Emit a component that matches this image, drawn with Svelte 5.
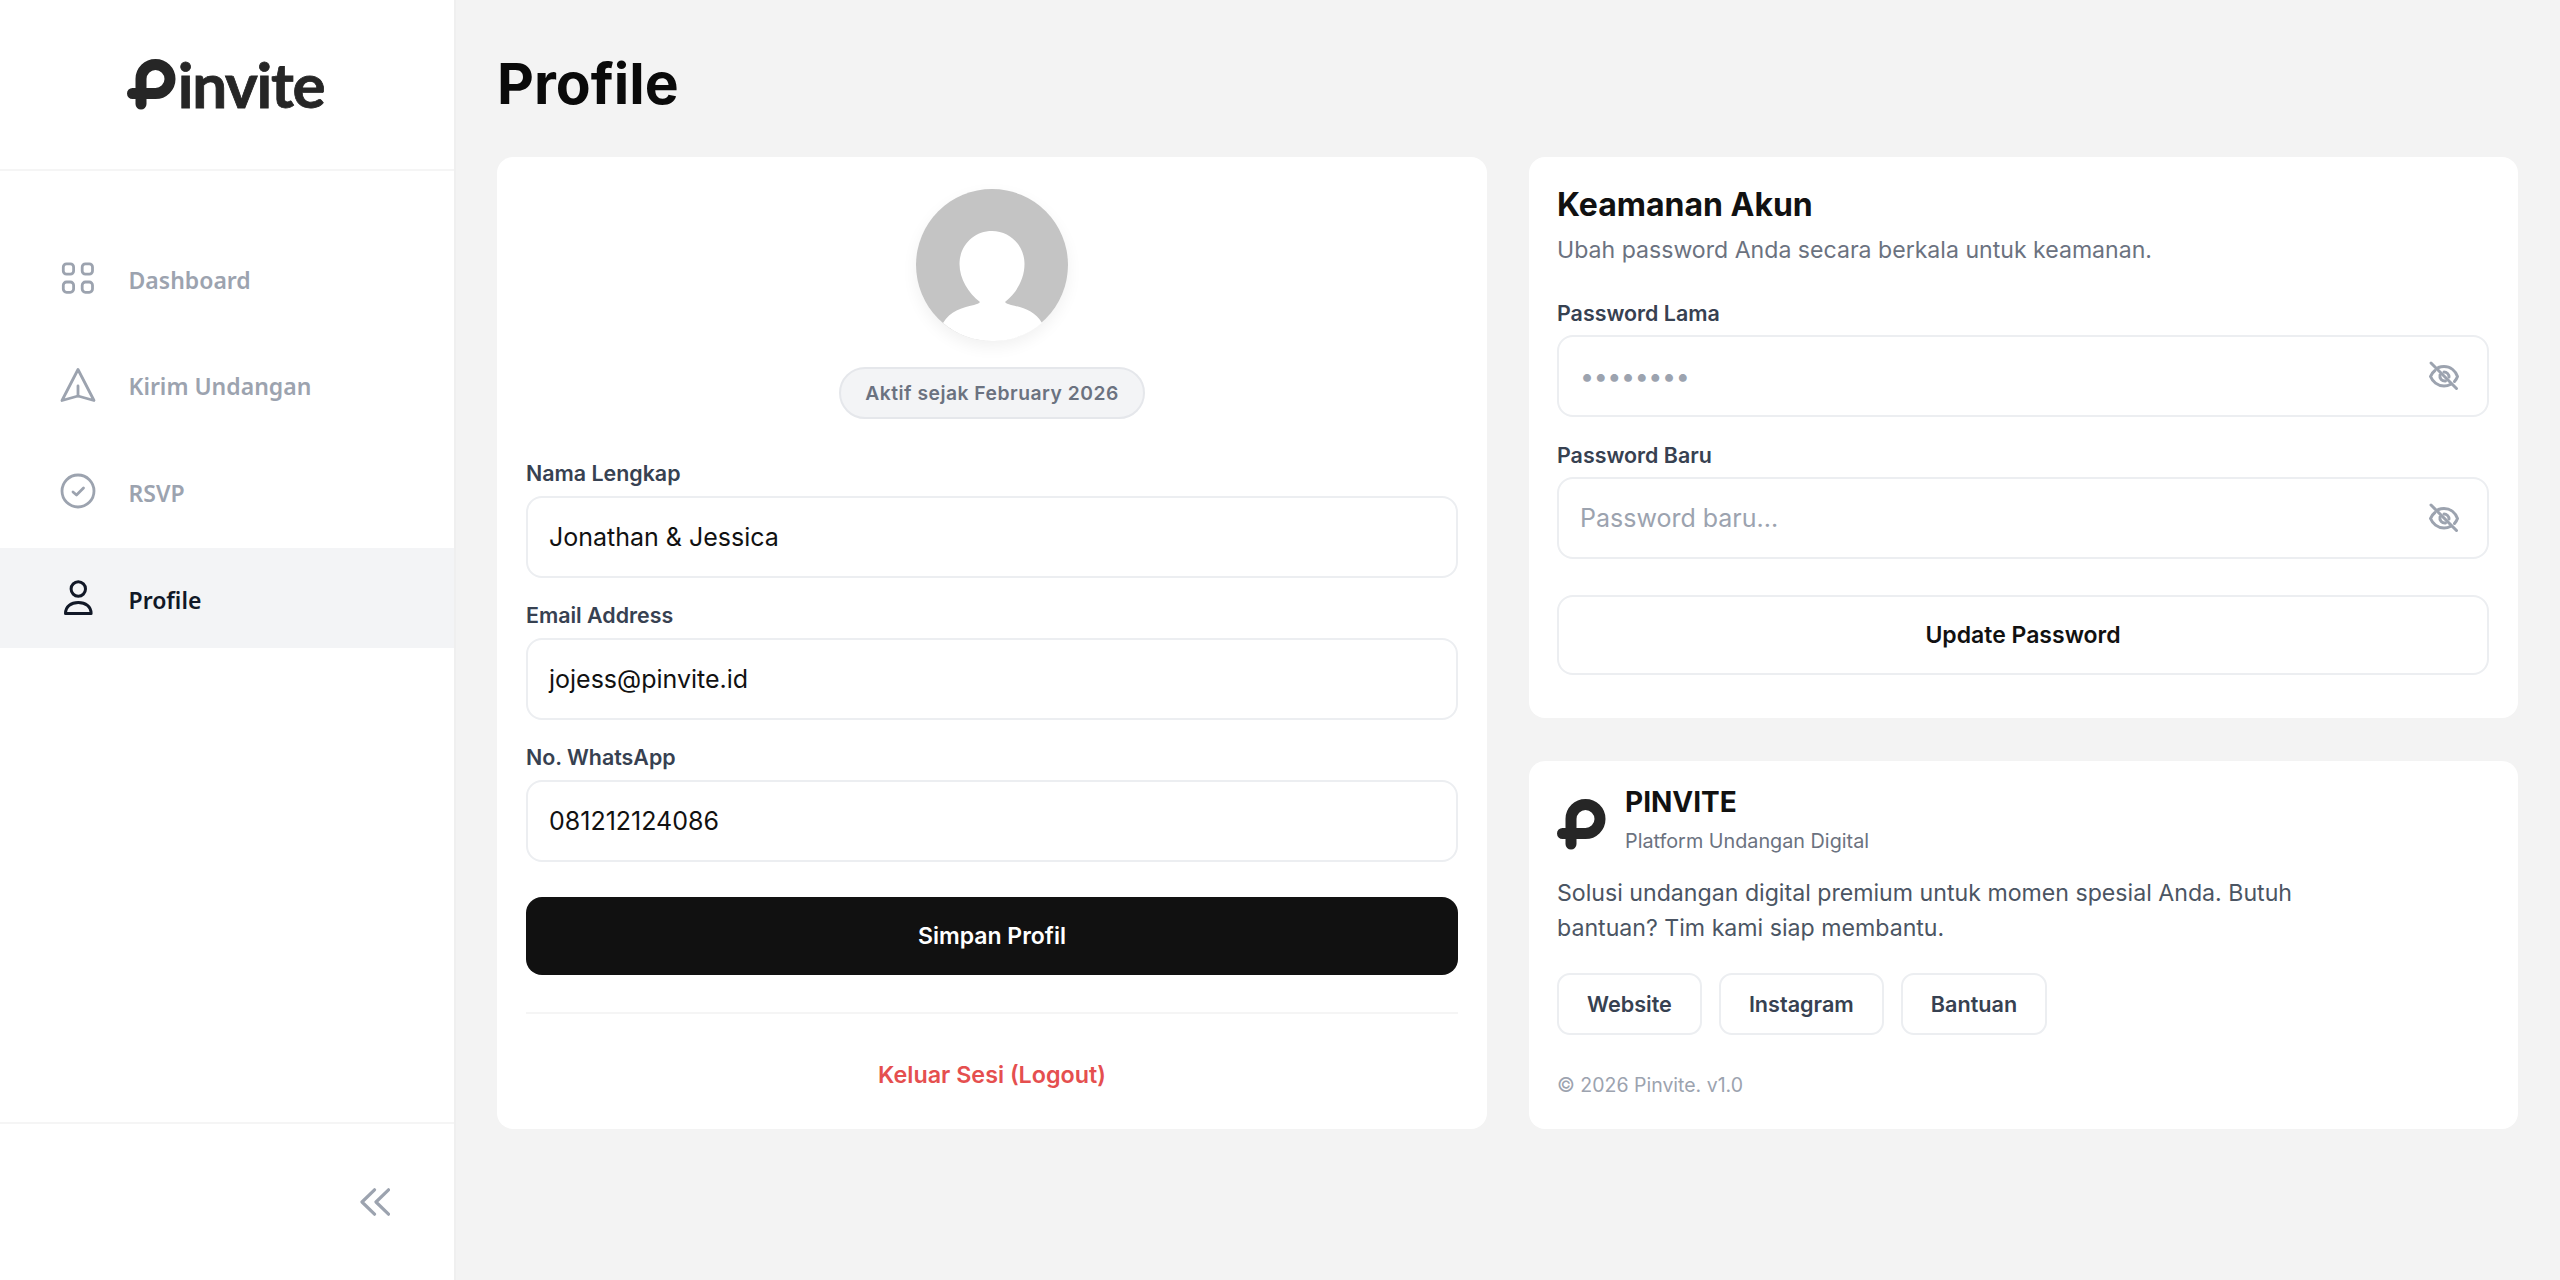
<script>
  const nav = [
    { label: 'Dashboard', icon: 'grid' },
    { label: 'Kirim Undangan', icon: 'send' },
    { label: 'RSVP', icon: 'check' },
    { label: 'Profile', icon: 'user', active: true }
  ];
  const fields = [
    { label: 'Nama Lengkap', value: 'Jonathan & Jessica' },
    { label: 'Email Address', value: 'jojess@pinvite.id' },
    { label: 'No. WhatsApp', value: '081212124086' }
  ];
  const links = ['Website', 'Instagram', 'Bantuan'];
</script>

{#snippet mark()}
  <svg class="mark" width="50" height="51" viewBox="0 0 50 51" fill="none" stroke="#262626" stroke-width="11" stroke-linecap="round">
    <path d="M14 45V20a14.500 14.500 0 1 1 14.500 14.500H5.500" />
  </svg>
{/snippet}

{#snippet eye()}
  <svg class="eye" width="32" height="32" viewBox="0 0 32 32" fill="none" stroke="#9ca3af" stroke-width="3" stroke-linecap="round" stroke-linejoin="round">
    <path d="M7 10.500C4.500 12.500 3 15 2.500 16.500 4.500 21.500 9.500 26 16 26c2.500 0 4.800-.7 6.800-1.800" />
    <path d="M10.500 7.500C12.200 6.800 14 6.500 16 6.500c6.500 0 11.500 4.500 13.500 10-.6 1.800-1.700 3.500-3 5" />
    <path d="M16 12a5 5 0 0 1 5 5" />
    <path d="M12 15a5 5 0 0 0 5.500 6" />
    <path d="M3 3l25.500 25.500" />
  </svg>
{/snippet}

<div class="shell">
  <aside class="sidebar">
    <div class="brand">
      {@render mark()}
      <span class="wordmark">invite</span>
    </div>
    <nav class="nav">
      {#each nav as item}
        <div class="item" class:active={item.active}>
          <svg width="38" height="38" viewBox="0 0 38 38" fill="none" stroke="currentColor" stroke-width="2.800" stroke-linecap="round" stroke-linejoin="round">
            {#if item.icon === 'grid'}
              <rect x="4.300" y="4.800" width="10.300" height="10.300" rx="3.200" />
              <rect x="23.200" y="4.800" width="10.300" height="10.300" rx="3.200" />
              <rect x="4.300" y="23" width="10.300" height="10.300" rx="3.200" />
              <rect x="23.200" y="23" width="10.300" height="10.300" rx="3.200" />
            {:else if item.icon === 'send'}
              <path d="M19 3.500 35 34.500 19 30 3 34.500Z" />
              <path d="M19 20v10" />
            {:else if item.icon === 'check'}
              <circle cx="19" cy="19" r="16" />
              <path d="M14 20l3.500 3 7-7" />
            {:else}
              <circle cx="19.300" cy="10" r="7.200" stroke-width="3" />
              <path d="M6.500 34.500c0-7 5.500-11 12.800-11s12.800 4 12.800 11Z" stroke-width="3" />
            {/if}
          </svg>
          <span>{item.label}</span>
        </div>
      {/each}
    </nav>
    <div class="collapse">
      <svg width="30" height="28" viewBox="0 0 30 28" fill="none" stroke="#9ca3af" stroke-width="3.200" stroke-linecap="round" stroke-linejoin="round">
        <path d="M14.500 1.800 2 14l12.500 12.200" />
        <path d="M28.500 1.800 16 14l12.500 12.200" />
      </svg>
    </div>
  </aside>

  <main class="main">
    <h1>Profile</h1>
    <div class="columns">
      <section class="card profile">
        <div class="avatar">
          <svg width="152" height="152" viewBox="0 0 152 152">
            <circle cx="76" cy="76" r="76" fill="#c4c4c4" />
            <path fill="#ffffff" d="M76 42c18 0 32.500 14.500 32.500 33 0 15-8 29-19.500 38 1 1.500 3 2 6 3 12 2.500 24 6 31 18A76 76 0 0 1 76 152a76 76 0 0 1-49-18c7-12 19-15.500 31-18 3-1 5-1.500 6-3-11.500-9-20.500-23-20.500-38 0-18.500 14.500-33 32.500-33Z" />
          </svg>
        </div>
        <div class="badge">Aktif sejak February 2026</div>
        <div class="fields">
          {#each fields as f}
            <div class="field">
              <div class="label">{f.label}</div>
              <div class="input">{f.value}</div>
            </div>
          {/each}
        </div>
        <button class="primary">Simpan Profil</button>
        <div class="divider"></div>
        <div class="logout">Keluar Sesi (Logout)</div>
      </section>

      <div class="right">
        <section class="card security">
          <h2>Keamanan Akun</h2>
          <p class="sub">Ubah password Anda secara berkala untuk keamanan.</p>
          <div class="field first">
            <div class="label">Password Lama</div>
            <div class="input pass"><span class="dots">••••••••</span>{@render eye()}</div>
          </div>
          <div class="field">
            <div class="label">Password Baru</div>
            <div class="input pass"><span class="placeholder">Password baru...</span>{@render eye()}</div>
          </div>
          <button class="outline">Update Password</button>
        </section>

        <section class="card about">
          <div class="about-head">
            {@render mark()}
            <div>
              <div class="about-title">PINVITE</div>
              <div class="about-sub">Platform Undangan Digital</div>
            </div>
          </div>
          <p class="about-text">Solusi undangan digital premium untuk momen spesial Anda. Butuh bantuan? Tim kami siap membantu.</p>
          <div class="links">
            {#each links as l}
              <div class="link">{l}</div>
            {/each}
          </div>
          <div class="copy">© 2026 Pinvite. v1.0</div>
        </section>
      </div>
    </div>
  </main>
</div>

<style>
  :global(body) {
    margin: 0;
    background: #f3f3f3;
  }
  .shell {
    display: flex;
    width: 2560px;
    height: 1280px;
    font-family: Inter, sans-serif;
    color: #111111;
    background: #f3f3f3;
    overflow: hidden;
  }
  .sidebar {
    width: 456px;
    box-sizing: border-box;
    flex: none;
    background: #ffffff;
    border-right: 2px solid #efefef;
    display: flex;
    flex-direction: column;
  }
  .brand {
    height: 171px;
    flex: none;
    box-sizing: border-box;
    border-bottom: 2px solid #f5f5f5;
    display: flex;
    align-items: flex-start;
    justify-content: center;
    padding-top: 59px;
    padding-right: 3px;
  }
  .wordmark {
    font-family: Lato, sans-serif;
    font-weight: 700;
    font-size: 62px;
    line-height: 50px;
    letter-spacing: -1.300px;
    color: #262626;
    margin-left: 1px;
    -webkit-text-stroke: 0.8px #262626;
  }
  .nav {
    flex: 1;
    padding-top: 57px;
    display: flex;
    flex-direction: column;
    gap: 6.700px;
  }
  .item {
    height: 100px;
    display: flex;
    align-items: center;
    gap: 31.500px;
    padding-left: 59px;
    color: #9ca3af;
    font-family: "Noto Sans", sans-serif;
    font-weight: 600;
    font-size: 23px;
  }
  .item span {
    padding-top: 3px;
  }
  .item.active {
    background: #f3f4f6;
    color: #111827;
  }
  .collapse {
    height: 158px;
    flex: none;
    box-sizing: border-box;
    border-top: 2px solid #f5f5f5;
    display: flex;
    align-items: center;
    justify-content: flex-end;
    padding-right: 64px;
  }
  .main {
    flex: 1;
    min-width: 0;
    padding: 0 41px 0 41px;
  }
  h1 {
    margin: 0;
    height: 157px;
    box-sizing: border-box;
    padding-top: 47px;
    font-size: 57px;
    line-height: 74px;
    font-weight: 700;
    color: #0a0a0a;
  }
  .columns {
    display: grid;
    grid-template-columns: 990px 989px;
    gap: 42px;
  }
  .card {
    background: #ffffff;
    border-radius: 16px;
    box-sizing: border-box;
    padding: 28px;
  }
  .profile {
    height: 972px;
    padding: 32px 29px 28px;
    display: flex;
    flex-direction: column;
    align-items: stretch;
  }
  .avatar {
    align-self: center;
    width: 152px;
    height: 152px;
    border-radius: 50%;
    box-shadow: 0 6px 16px rgba(0, 0, 0, 0.06);
    line-height: 0;
  }
  .badge {
    align-self: center;
    margin-top: 26px;
    height: 52px;
    box-sizing: border-box;
    padding: 0 24.500px;
    border: 2px solid #e5e7eb;
    border-radius: 26px;
    background: #f3f4f6;
    color: #6b7280;
    font-size: 19.300px;
    font-weight: 600;
    letter-spacing: 0.500px;
    display: flex;
    align-items: center;
  }
  .fields {
    margin-top: 40px;
    display: flex;
    flex-direction: column;
    gap: 23px;
  }
  .label {
    font-size: 21.400px;
    line-height: 28px;
    font-weight: 600;
    color: #374151;
    margin-bottom: 9px;
  }
  .input {
    height: 82px;
    box-sizing: border-box;
    border: 2px solid #eceef1;
    border-radius: 16px;
    padding: 0 21px;
    display: flex;
    align-items: center;
    font-size: 25px;
    color: #111111;
  }
  .primary,
  .outline {
    font-family: inherit;
    font-size: 23px;
    font-weight: 600;
    border-radius: 16px;
    display: block;
    width: 100%;
  }
  .primary {
    margin-top: 35px;
    height: 78px;
    border: 0;
    background: #111111;
    color: #ffffff;
  }
  .divider {
    margin-top: 37px;
    height: 2px;
    background: #f5f5f5;
  }
  .logout {
    margin-top: 45px;
    text-align: center;
    font-size: 23.300px;
    line-height: 32px;
    font-weight: 600;
    color: #e54f4f;
  }
  .right {
    display: flex;
    flex-direction: column;
    gap: 43px;
  }
  .security {
    height: 561px;
    padding: 26px 29px 28px 28px;
  }
  .security .label {
    margin-bottom: 8px;
  }
  h2 {
    margin: 0;
    font-size: 32px;
    line-height: 44px;
    font-weight: 700;
    color: #111111;
  }
  .sub {
    margin: 6px 0 0;
    font-size: 23.100px;
    line-height: 34px;
    color: #6b7280;
  }
  .field.first {
    margin-top: 32px;
    margin-bottom: 24px;
  }
  .pass {
    justify-content: space-between;
    padding-right: 27px;
  }
  .dots {
    color: #9ca3af;
    font-size: 25px;
    letter-spacing: -0.400px;
  }
  .placeholder {
    color: #9ca3af;
  }
  .outline {
    margin-top: 36px;
    height: 80px;
    background: #ffffff;
    border: 2px solid #eceef1;
    color: #111111;
  }
  .about {
    height: 368px;
    padding-top: 23px;
  }
  .about-head {
    display: flex;
    gap: 18px;
  }
  .mark {
    flex: none;
  }
  .about-head .mark {
    align-self: flex-end;
    margin-bottom: 5px;
  }
  .about-title {
    font-size: 28px;
    line-height: 36px;
    font-weight: 700;
    color: #111111;
  }
  .about-sub {
    margin-top: 7px;
    font-size: 19.800px;
    line-height: 28px;
    color: #6b7280;
  }
  .about-text {
    margin: 20.500px 0 0;
    max-width: 760px;
    font-size: 23.150px;
    line-height: 35px;
    color: #4b5563;
  }
  .links {
    margin-top: 27px;
    display: flex;
    gap: 17px;
  }
  .link {
    height: 62px;
    box-sizing: border-box;
    padding: 0 28px;
    border: 2px solid #eceef1;
    border-radius: 13px;
    display: flex;
    align-items: center;
    font-size: 21.600px;
    font-weight: 600;
    color: #374151;
  }
  .copy {
    margin-top: 36px;
    font-size: 19.500px;
    line-height: 28px;
    color: #9ca3af;
  }
</style>
